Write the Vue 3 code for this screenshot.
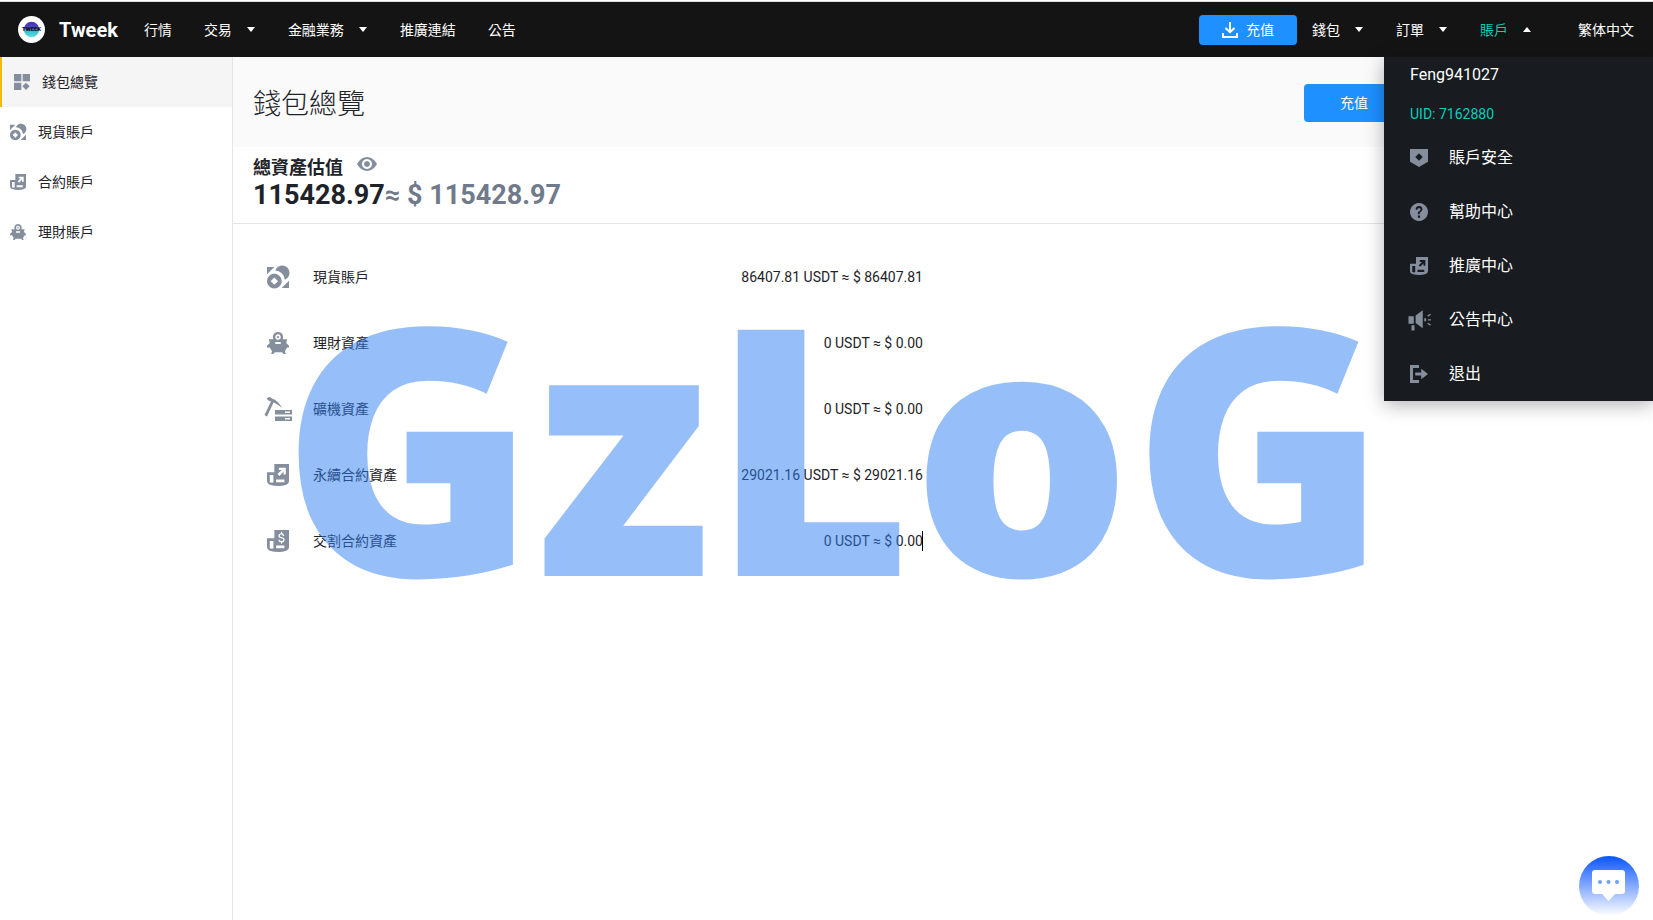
<template>
    <div class="page">
        <header class="topbar">
            <a class="brand" href="#">
                <svg class="logo" viewBox="0 0 28 28" aria-hidden="true">
                    <defs>
                        <linearGradient id="logo-fill" x1="0" y1="0" x2="0" y2="1">
                            <stop offset="0" stop-color="#4a2fb8" />
                            <stop offset="0.45" stop-color="#4b4cc0" />
                            <stop offset="0.6" stop-color="#35bccb" />
                            <stop offset="1" stop-color="#5fe0e6" />
                        </linearGradient>
                    </defs>
                    <circle cx="14" cy="14" r="14" fill="#fff" />
                    <circle cx="14" cy="14" r="8" fill="url(#logo-fill)" />
                    <text x="14" y="16" text-anchor="middle" font-size="6" font-weight="900" fill="#11131c">TWEEK</text>
                </svg>
                <span>Tweek</span>
            </a>

            <nav class="main-nav">
                <a v-for="item in mainNav" :key="item.label" href="#">
                    {{ item.label }}<i v-if="item.caret" class="caret"></i>
                </a>
            </nav>

            <div class="user-nav">
                <button class="deposit" type="button">
                    <svg viewBox="0 0 16 16" aria-hidden="true">
                        <path d="M8 0v9M3.500 6L8 10.200L12.500 6M1 11v4h14v-4" fill="none" stroke="#fff" stroke-width="2" />
                    </svg>
                    充值
                </button>
                <a href="#">錢包<i class="caret"></i></a>
                <a href="#">訂單<i class="caret"></i></a>
                <a href="#" class="current">賬戶<i class="caret up"></i></a>
                <a href="#" class="language">繁体中文</a>

                <div class="account-menu">
                    <div class="username">Feng941027</div>
                    <div class="uid">UID: 7162880</div>
                    <a v-for="item in accountMenu" :key="item.label" href="#">
                        <svg viewBox="0 0 24 24" aria-hidden="true"><path :d="icons[item.icon]" /></svg>
                        {{ item.label }}
                    </a>
                </div>
            </div>
        </header>

        <div class="body">
            <aside class="sidebar">
                <a v-for="(item, index) in sideNav" :key="item.label" href="#" :class="{ active: index === 0 }">
                    <svg viewBox="0 0 24 24" aria-hidden="true"><path :d="icons[item.icon]" /></svg>
                    {{ item.label }}
                </a>
            </aside>

            <main class="content">
                <div class="heading">
                    <h1>錢包總覽</h1>
                    <button type="button">充值</button>
                </div>

                <section class="total">
                    <h2>
                        總資產估值
                        <svg viewBox="0 0 20 14" aria-hidden="true"><path :d="icons.eye" /></svg>
                    </h2>
                    <div class="amount">115428.97<span>≈ $ 115428.97</span></div>
                </section>

                <ul class="assets">
                    <li v-for="asset in assets" :key="asset.label">
                        <svg :class="{ wide: asset.icon === 'mining' }" :viewBox="asset.icon === 'mining' ? '0 0 28 24' : '0 0 24 24'" aria-hidden="true">
                            <path :d="icons[asset.icon]" />
                        </svg>
                        <span>{{ asset.label }}</span>
                        <span class="value" :class="{ editing: asset.editing }">{{ asset.value }}</span>
                    </li>
                </ul>
            </main>
        </div>

        <div class="watermark">GzLoG</div>

        <button class="chat" type="button" aria-label="chat">
            <svg viewBox="0 0 60 60" aria-hidden="true">
                <path d="M16 14h27q3 0 3 3v18q0 3-3 3h-7l-6.500 7l-6.500-7h-7q-3 0-3-3V17q0-3 3-3z" fill="#fff" />
                <g fill="#6d9dff">
                    <circle cx="21" cy="26" r="2" />
                    <circle cx="29.500" cy="26" r="2" />
                    <circle cx="38" cy="26" r="2" />
                </g>
            </svg>
        </button>
    </div>
</template>


<script setup>

const mainNav = [
    { label: "行情" },
    { label: "交易", caret: true },
    { label: "金融業務", caret: true },
    { label: "推廣連結" },
    { label: "公告" }
];

const accountMenu = [
    { label: "賬戶安全", icon: "shield" },
    { label: "幫助中心", icon: "help" },
    { label: "推廣中心", icon: "contract" },
    { label: "公告中心", icon: "horn" },
    { label: "退出", icon: "exit" }
];

const sideNav = [
    { label: "錢包總覽", icon: "overview" },
    { label: "現貨賬戶", icon: "spot" },
    { label: "合約賬戶", icon: "contract" },
    { label: "理財賬戶", icon: "piggy" }
];

const assets = [
    { label: "現貨賬戶", icon: "spot", value: "86407.81 USDT ≈ $ 86407.81" },
    { label: "理財資產", icon: "piggy", value: "0 USDT ≈ $ 0.00" },
    { label: "礦機資產", icon: "mining", value: "0 USDT ≈ $ 0.00" },
    { label: "永續合約資產", icon: "contract", value: "29021.16 USDT ≈ $ 29021.16" },
    { label: "交割合約資產", icon: "delivery", value: "0 USDT ≈ $ 0.00", editing: true }
];

// every icon is one even-odd path
const icons = {
    overview: "M0 0h11v11H0zM13 0h11v11H13zM0 13h11v11H0zM18 13l5.500 5.500L18 24l-5.500-5.500z",
    spot: "M0 1h8L0 9zM24 16v8h-8zM9 5A8 8 0 1 1 19.500 15A11 11 0 0 0 9 5zM8 8.500a8 8 0 1 0 .010 0zM8 12.500l4 4l-4 4l-4-4z",
    contract: "M8 0h16v19q0 2-3 3.500q-8 3-18 0q-3-1-3-4V9h8zM3 12v8q3 1 4 0v-8zM13 4v2.500h3L11.500 11l2 2L18 8.500v3h2.500V4zM10 17v3h9v-3z",
    delivery: "M8 0h16v19q0 2-3 3.500q-8 3-18 0q-3-1-3-4V9h8zM3 12v8q3 1 4 0v-8zM10 17v3h9v-3zM15.300 2v1.500q-3 .5-3 3q0 2 3 2.500q2.500 .5 2.500 1.500q0 1.500-2 1.500q-2 0-2-1.500h-1.500q0 2.500 3 3V15h1.200v-1.500q2.800-.5 2.800-3q0-2-3-2.500q-2.500-.5-2.500-1.500q0-1.500 1.800-1.500q1.700 0 1.700 1.500H18.800q0-2.500-2.300-3V2z",
    piggy: "M12 0a5.500 5.500 0 0 1 5 8h5l-1 4l3 3v2h-2l-2.500 4l1 3h-2.500l-1.500-2H8.500L7 24H4.500l1-3L3 17H0v-2l3-3l-1-4h5a5.500 5.500 0 0 1 5-8zM12 2.500a3 3 0 1 0 .010 0zM12 4l1.500 1.500L12 7l-1.500-1.500zM9 11v2h6v-2z",
    mining: "M3 1l3-1l2 1.500Q14 3.500 18 11q-5-4.500-8.500-5.500L3 19.500L.5 18L7 4.500L3.500 3zM11 13h17v4.500H11zM21 14.500v1.500h5v-1.500zM11 19.500h17V24H11zM21 21v1.500h5V21z",
    shield: "M0 0h24v17l-12 7l-12-7zM12 5.500l5 5l-5 5l-5-5z",
    help: "M12 0a12 12 0 1 0 .010 0zM7.500 9q0-5 4.500-5t4.500 4.500q0 2-3.500 4.500v2h-2.500v-3q3.500-2 3.500-3.500q0-2-2-2t-2 2.500zM10.500 16.500h3v3h-3z",
    horn: "M-2 7h7v10H-2zM7.500 6l9.500-7v24l-9.500-7zM2 19h4v7H2zM19 9.500v4h2.500v-4zM23 6l4-2.500l1 1.500l-4 2.500zM24 11h4v1.500h-4zM23 17l1-1.500l4 2.500l-1 1.500z",
    exit: "M0 0h12v4H4v16h8v4H0zM7 10h8V5l9 7l-9 7v-5H7z",
    eye: "M0 7Q4 0 10 0T20 7Q16 14 10 14T0 7zM10 2a5 5 0 1 0 .010 0zM10 4a3 3 0 1 1-.010 0z"
};

</script>


<style>

body {
    margin: 0;
    background: #fff;
}

</style>

<style scoped>

.page {
    --grey: #848e9c;
    --blue: #1e90ff;
    --teal: #04d0bc;

    position: relative;
    display: flex;
    flex-direction: column;
    min-height: 100vh;
    box-sizing: border-box;
    padding-top: 1px;
    overflow: hidden;
    font: 14px/20px Roboto, "Noto Sans CJK TC", sans-serif;
    color: #1e2329;
}

a {
    color: inherit;
    text-decoration: none;
}

button {
    border: 0;
    padding: 0;
    border-radius: 4px;
    background: var(--blue);
    color: #fff;
    font: inherit;
    cursor: pointer;
}

svg {
    display: block;
    flex: none;
    overflow: visible;
    fill: var(--grey);
    fill-rule: evenodd;
}

.topbar {
    position: relative;
    z-index: 2;
    display: flex;
    align-items: center;
    height: 55px;
    padding: 0 19px 0 18px;
    border-top: 1px solid #dcdee0;
    background: #141414;
    color: #fff;
}

.brand {
    display: flex;
    align-items: center;
    gap: 14px;
    margin-right: 26px;
    font-size: 20px;
    font-weight: 700;
}

.logo {
    width: 27px;
    height: 27px;
}

.main-nav {
    display: flex;
    gap: 32px;
}

.main-nav .caret {
    margin-right: 1px;
}

.caret {
    display: inline-block;
    margin-left: 15px;
    border: 4px solid transparent;
    border-top: 5px solid #fff;
    border-bottom: 0;
    vertical-align: 3px;
}

.caret.up {
    border-top: 0;
    border-bottom: 5px solid #fff;
}

.user-nav {
    display: flex;
    align-items: center;
    gap: 33px;
    margin-left: auto;
}

.deposit {
    display: flex;
    align-items: center;
    justify-content: center;
    gap: 8px;
    width: 98px;
    height: 30px;
    margin-right: -18px;
}

.deposit svg {
    width: 16px;
    height: 16px;
}

.current {
    color: var(--teal);
}

.language {
    margin-left: 14px;
}

.account-menu {
    position: absolute;
    top: 55px;
    right: 0;
    width: 269px;
    box-sizing: border-box;
    padding-left: 26px;
    background: #181b20;
    box-shadow: 0 4px 18px rgb(0 0 0 / 30%);
}

.account-menu a {
    display: flex;
    align-items: center;
    gap: 21px;
    height: 54px;
    font-size: 16px;
}

.account-menu svg {
    width: 18px;
    height: 18px;
}

.username {
    font-size: 16px;
    line-height: 36px;
}

.uid {
    margin-bottom: -4px;
    line-height: 42px;
    color: var(--teal);
}

.body {
    display: flex;
    flex: 1;
}

.sidebar {
    width: 232px;
    border-right: 1px solid #e3e5e8;
}

.sidebar a {
    display: flex;
    align-items: center;
    gap: 12px;
    height: 50px;
    padding-left: 10px;
}

.sidebar a.active {
    padding-left: 12px;
    border-left: 2px solid #f0b90b;
    background: #f5f5f5;
}

.sidebar svg {
    width: 16px;
    height: 16px;
}

.content {
    flex: 1;
}

.heading {
    display: flex;
    align-items: center;
    justify-content: space-between;
    height: 90px;
    box-sizing: border-box;
    padding: 2px 249px 0 20px;
    background: #fafafa;
}

.heading button {
    width: 100px;
    height: 38px;
}

h1 {
    margin: 0;
    padding-top: 3px;
    font-size: 28px;
    line-height: 36px;
    font-weight: 300;
}

.total {
    height: 77px;
    box-sizing: border-box;
    padding: 9px 20px 0;
    border-bottom: 1px solid #e3e5e8;
}

h2 {
    display: flex;
    gap: 14px;
    margin: 0;
    font-size: 18px;
    line-height: 24px;
    font-weight: 700;
}

h2 svg {
    width: 20px;
    height: 14px;
    margin-top: 1px;
}

.amount {
    font-size: 27px;
    line-height: 30px;
    font-weight: 700;
}

.amount span {
    color: #707a8a;
}

.assets {
    width: 690px;
    box-sizing: border-box;
    margin: 0;
    padding: 20px 0 0 31px;
    list-style: none;
}

.assets li {
    display: grid;
    grid-template-columns: 28px 1fr auto;
    gap: 21px;
    align-items: center;
    height: 66px;
}

.assets svg {
    width: 22px;
    height: 22px;
    justify-self: center;
}

.assets svg.wide {
    width: 28px;
    height: 24px;
}

.editing {
    position: relative;
}

/* text caret */
.editing::after {
    content: "";
    position: absolute;
    top: 0;
    right: 0;
    width: 1px;
    height: 20px;
    background: #000;
}

.watermark {
    position: absolute;
    top: 210px;
    left: 281px;
    font: 900 345px/464px "Noto Sans", sans-serif;
    color: rgb(45 125 241 / 50%);
    pointer-events: none;
}

.chat {
    position: absolute;
    right: 14px;
    bottom: 4px;
    width: 60px;
    height: 60px;
    border-radius: 50%;
    background: linear-gradient(#0a55ff, #fff);
}

</style>
